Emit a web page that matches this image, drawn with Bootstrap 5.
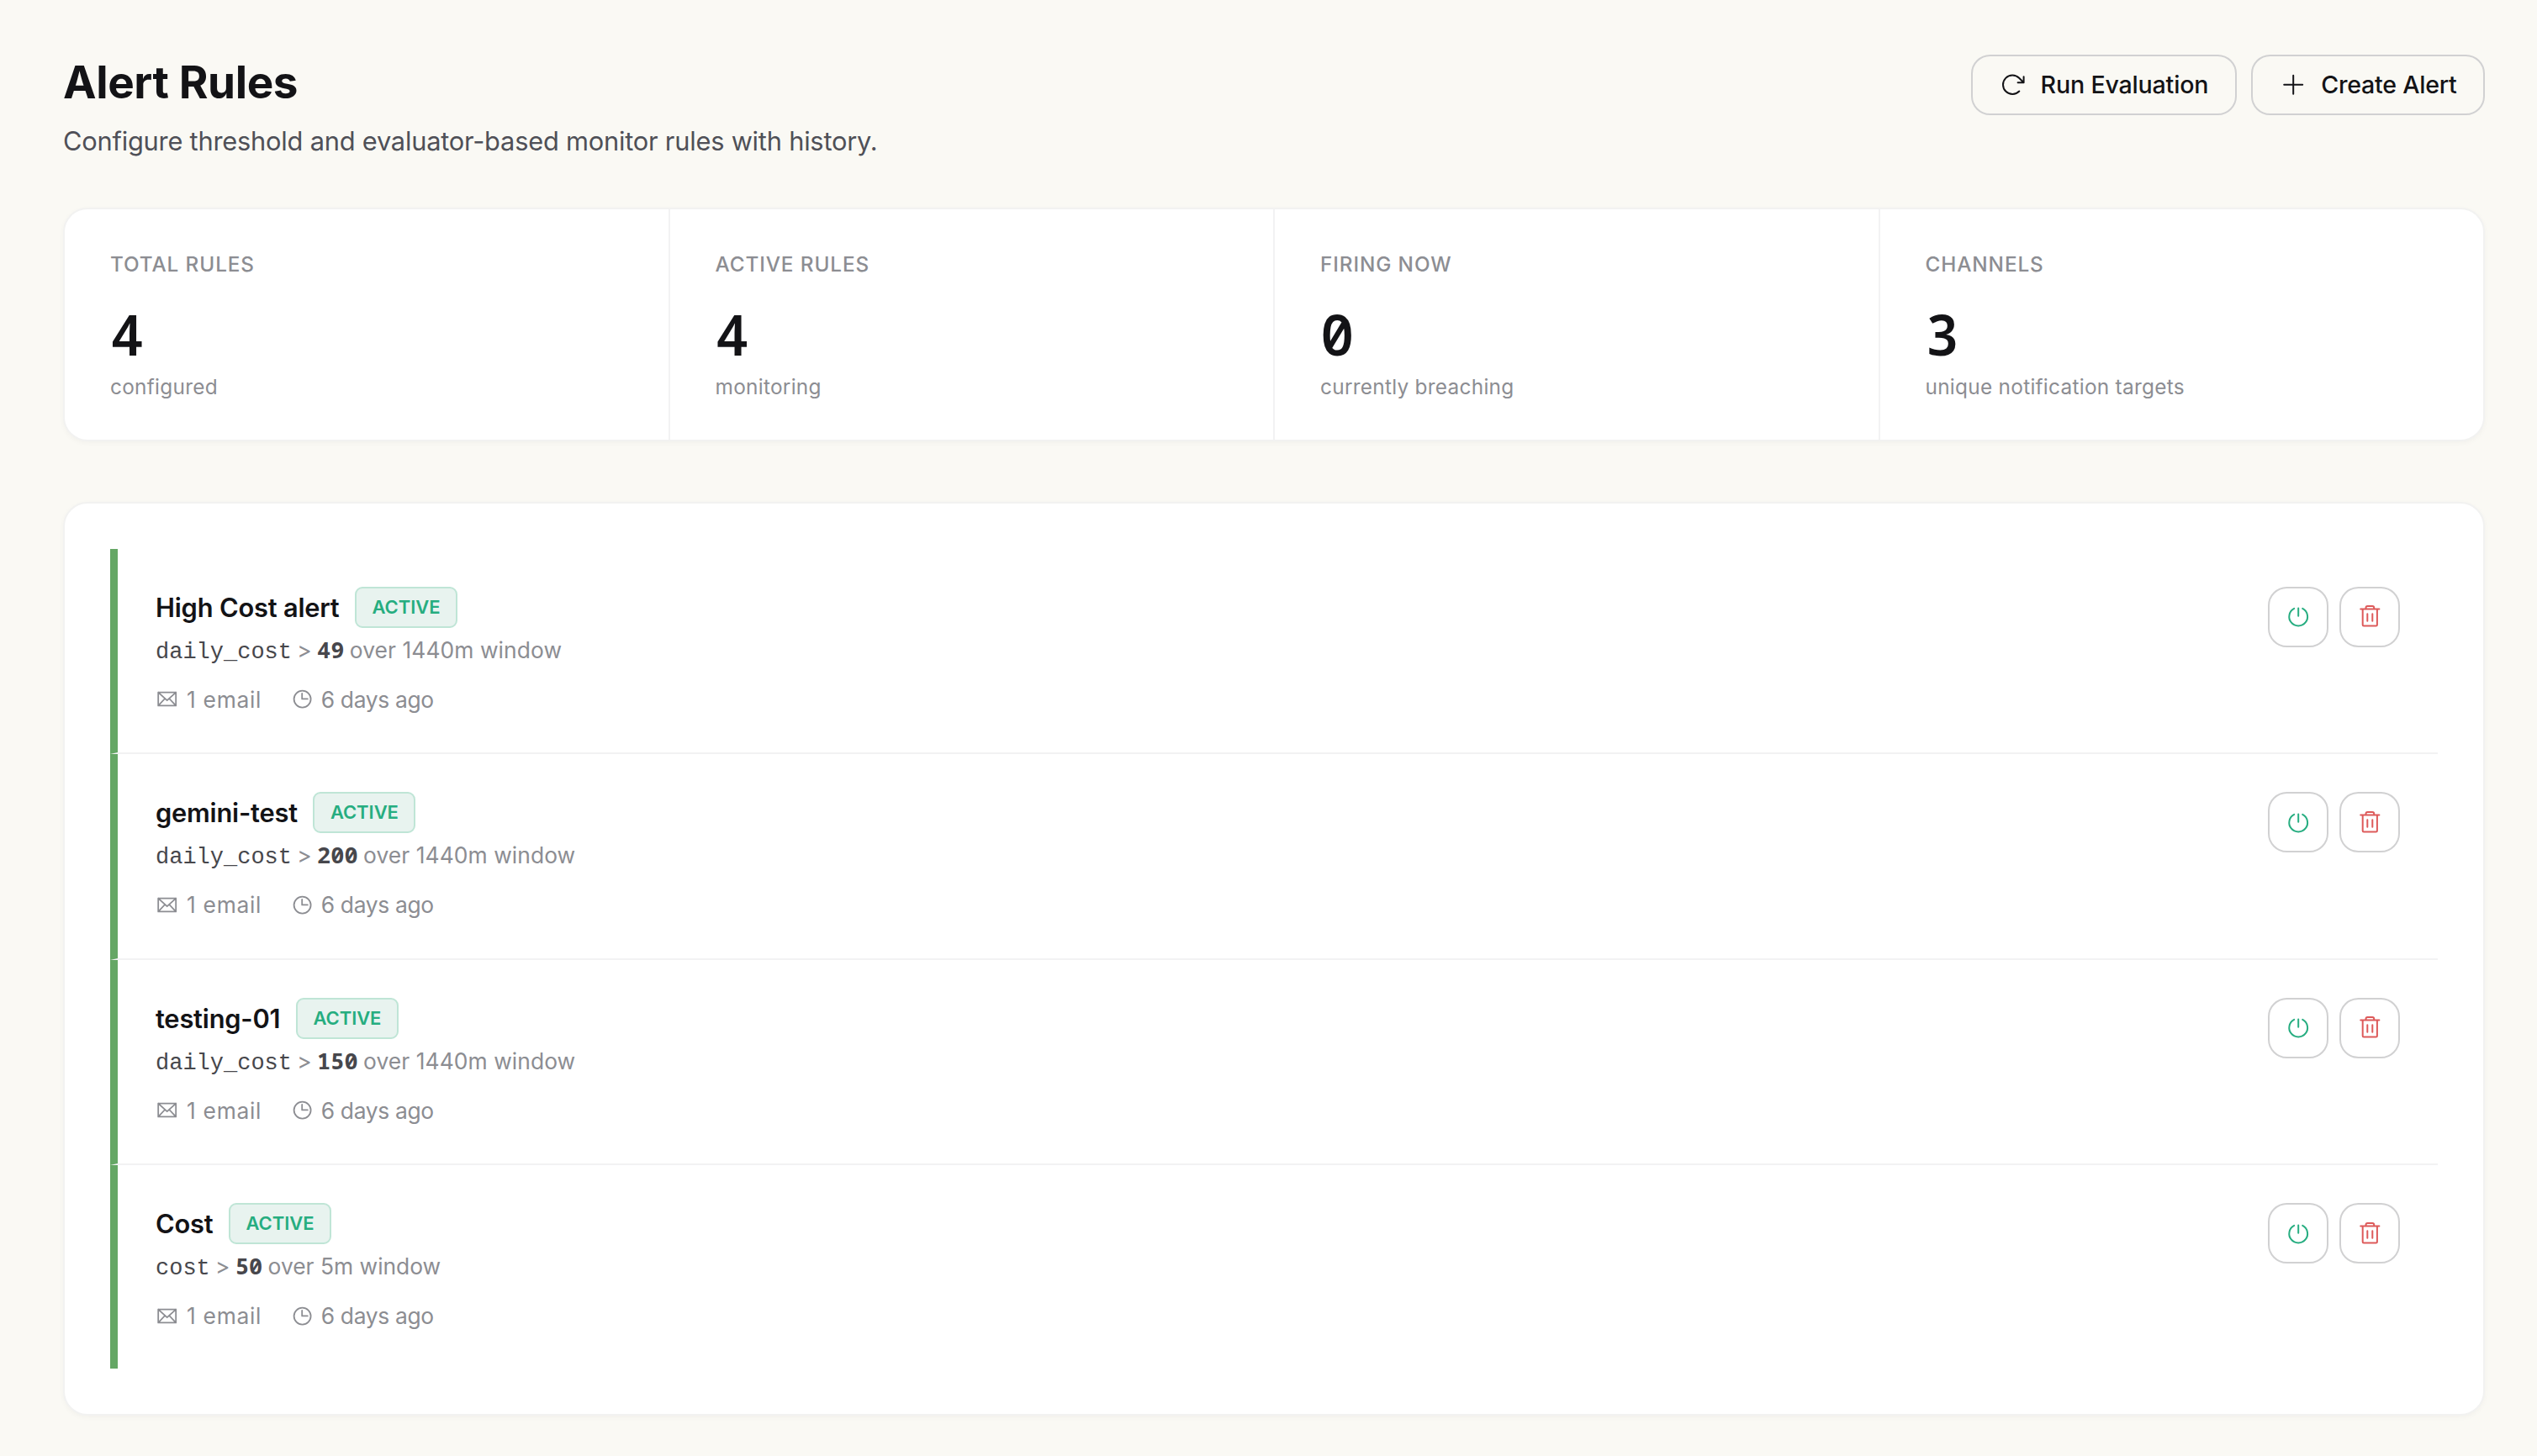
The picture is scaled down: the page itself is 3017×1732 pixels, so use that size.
<!DOCTYPE html>
<html lang="en">
<head>
<meta charset="utf-8">
<meta name="viewport" content="width=device-width, initial-scale=1">
<title>Alert Rules</title>
<link rel="stylesheet" href="https://cdn.jsdelivr.net/npm/bootstrap@5.3.0/dist/css/bootstrap.min.css">
<style>
  body{font-family:Inter,"Liberation Sans",sans-serif;background:#faf9f4;color:#131316}
  .page{padding:65px 62px 46px 75px}
  .page-title{font-size:53px;font-weight:700;line-height:66px;letter-spacing:-.4px;margin:0}
  .page-sub{font-size:30.8px;line-height:48px;letter-spacing:-.22px;color:#4f5057;margin:12.5px 0 0}
  .actions{gap:17.5px}
  .action-btn{height:72px;padding:0 31.5px;border:2px solid #d1d1d2;border-radius:22.5px;gap:18px;font-size:28.6px;font-weight:500;letter-spacing:-.19px;color:#131316}
  .action-btn+.action-btn{letter-spacing:-.25px}
  .action-btn svg{width:31.5px;height:31.5px}
  svg{fill:none;stroke:currentColor;stroke-width:2;stroke-linecap:round;stroke-linejoin:round;overflow:visible;flex:none}
  .panel{background:#fff;border:2px solid #f2f2f1;border-radius:29px;box-shadow:0 2px 6px rgba(20,20,30,.035)}
  .stats{height:278px;margin-top:55px;overflow:hidden}
  .stat{padding:47.5px 54px 0}
  .stat+.stat{border-left:2px solid #f2f2f3}
  .stat-label{font-size:24.3px;font-weight:500;line-height:36px;letter-spacing:.9px;color:#8c8d92}
  .stat-value{font-family:"Noto Sans Mono","DejaVu Sans Mono",monospace;font-size:67.5px;font-weight:600;line-height:76px;margin-top:27px}
  .stat-note{font-size:24.4px;line-height:36px;letter-spacing:.27px;color:#8c8d92;margin-top:7px}
  .rules{margin-top:72px;padding:54px}
  .rule{height:244.6px;padding:45px;border-left:9px solid #65a765;border-bottom:2px solid #f2f2f3}
  .rule:last-child{height:242px;border-bottom:0}
  .rule-name{font-size:30.8px;font-weight:600;line-height:49px;letter-spacing:-.2px}
  .rule-head{gap:18.5px;height:49px}
  .state{height:49px;padding:0 18.5px;border:2px solid #bfe5d6;border-radius:9px;background:#e8f3ef;color:#26ad80;font-size:22px;font-weight:600;letter-spacing:-.05px}
  .cond{gap:6.3px;margin-top:6px;font-size:26.4px;line-height:40px;height:40px;color:#8c8d92}
  .metric{font-family:"Liberation Mono",monospace;font-size:27px;color:#47474c}
  .limit{font-family:"Noto Sans Mono","DejaVu Sans Mono",monospace;font-size:27px;font-weight:700;color:#47474c}
  .over{letter-spacing:.07px}
  .meta{gap:34.6px;margin-top:19px;font-size:26.4px;line-height:40px;color:#8c8d92}
  .mails{gap:10px;letter-spacing:.7px}
  .since{gap:9px;letter-spacing:-.34px}
  .meta svg{width:27px;height:27px;stroke-width:1.8}
  .tool-btn{width:72px;height:72px;padding:0;border:2px solid #d1d1d2;border-radius:22.5px;background:#fff}
  .tool-btn svg{width:27px;height:27px}
  .tools{gap:13px}
  .power{color:#26ad80}
  .trash{color:#dd5a5a}
</style>
</head>
<body>
<svg class="d-none" aria-hidden="true">
  <symbol id="i-mail" viewBox="0 0 27 27" overflow="visible"><path d="M3.2 5.6h21v15.8h-21zM3.2 5.6l10.5 9.6L24.2 5.6M3.5 21.1l7.6-8.1M23.9 21.1 16.3 13"/></symbol>
  <symbol id="i-clock" viewBox="0 0 27 27" overflow="visible"><circle cx="13.6" cy="13.6" r="10"/><path d="M13.2 6.9v6.5h6.6"/></symbol>
  <symbol id="i-power" viewBox="0 0 27 27" overflow="visible"><path d="M8.2 3.9a10.9 10.9 0 1 0 10 0M13.2 3.4v9.3"/></symbol>
  <symbol id="i-trash" viewBox="0 0 27 27" overflow="visible"><path d="M2.2 4.6h22.2M4.7 4.6v18.6q0 1.3 1.3 1.3h14.6q1.3 0 1.3-1.3V4.6M8.5 4.6V2.9q0-2 2-2h5.7q2 0 2 2v1.7M10.3 10.3v8.5M16.3 10.3v8.5"/></symbol>
</svg>
<main class="page">
  <header class="d-flex justify-content-between align-items-start">
    <div>
      <h1 class="page-title">Alert Rules</h1>
      <p class="page-sub">Configure threshold and evaluator-based monitor rules with history.</p>
    </div>
    <div class="actions d-flex">
      <button class="btn action-btn d-flex align-items-center" type="button">
        <svg viewBox="0 0 31.5 31.5"><path d="M24.3 23.5A11.2 11.2 0 1 1 24.1 7.8L29.6 13.2M22.6 13.2h7v-7"/></svg>Run Evaluation</button>
      <button class="btn action-btn d-flex align-items-center" type="button">
        <svg viewBox="0 0 31.5 31.5"><path d="M5.2 15.75h22M16.2 4.75v22"/></svg>Create Alert</button>
    </div>
  </header>

  <section class="panel stats row g-0">
    <div class="col stat"><div class="stat-label">TOTAL RULES</div><div class="stat-value">4</div><div class="stat-note">configured</div></div>
    <div class="col stat"><div class="stat-label">ACTIVE RULES</div><div class="stat-value">4</div><div class="stat-note">monitoring</div></div>
    <div class="col stat"><div class="stat-label">FIRING NOW</div><div class="stat-value">0</div><div class="stat-note">currently breaching</div></div>
    <div class="col stat"><div class="stat-label">CHANNELS</div><div class="stat-value">3</div><div class="stat-note">unique notification targets</div></div>
  </section>

  <section class="panel rules">
    <article class="rule d-flex justify-content-between align-items-start">
      <div>
        <div class="rule-head d-flex align-items-center"><span class="rule-name">High Cost alert</span><span class="state d-flex align-items-center">ACTIVE</span></div>
        <div class="cond d-flex align-items-baseline"><span class="metric">daily_cost</span><span>&gt;</span><span class="limit">49</span><span class="over">over 1440m window</span></div>
        <div class="meta d-flex"><span class="mails d-flex align-items-center"><svg><use href="#i-mail"/></svg>1 email</span><span class="since d-flex align-items-center"><svg><use href="#i-clock"/></svg>6 days ago</span></div>
      </div>
      <div class="tools d-flex">
        <button class="btn tool-btn power d-flex align-items-center justify-content-center" type="button" aria-label="Disable"><svg><use href="#i-power"/></svg></button>
        <button class="btn tool-btn trash d-flex align-items-center justify-content-center" type="button" aria-label="Delete"><svg><use href="#i-trash"/></svg></button>
      </div>
    </article>
    <article class="rule d-flex justify-content-between align-items-start">
      <div>
        <div class="rule-head d-flex align-items-center"><span class="rule-name">gemini-test</span><span class="state d-flex align-items-center">ACTIVE</span></div>
        <div class="cond d-flex align-items-baseline"><span class="metric">daily_cost</span><span>&gt;</span><span class="limit">200</span><span class="over">over 1440m window</span></div>
        <div class="meta d-flex"><span class="mails d-flex align-items-center"><svg><use href="#i-mail"/></svg>1 email</span><span class="since d-flex align-items-center"><svg><use href="#i-clock"/></svg>6 days ago</span></div>
      </div>
      <div class="tools d-flex">
        <button class="btn tool-btn power d-flex align-items-center justify-content-center" type="button" aria-label="Disable"><svg><use href="#i-power"/></svg></button>
        <button class="btn tool-btn trash d-flex align-items-center justify-content-center" type="button" aria-label="Delete"><svg><use href="#i-trash"/></svg></button>
      </div>
    </article>
    <article class="rule d-flex justify-content-between align-items-start">
      <div>
        <div class="rule-head d-flex align-items-center"><span class="rule-name">testing-01</span><span class="state d-flex align-items-center">ACTIVE</span></div>
        <div class="cond d-flex align-items-baseline"><span class="metric">daily_cost</span><span>&gt;</span><span class="limit">150</span><span class="over">over 1440m window</span></div>
        <div class="meta d-flex"><span class="mails d-flex align-items-center"><svg><use href="#i-mail"/></svg>1 email</span><span class="since d-flex align-items-center"><svg><use href="#i-clock"/></svg>6 days ago</span></div>
      </div>
      <div class="tools d-flex">
        <button class="btn tool-btn power d-flex align-items-center justify-content-center" type="button" aria-label="Disable"><svg><use href="#i-power"/></svg></button>
        <button class="btn tool-btn trash d-flex align-items-center justify-content-center" type="button" aria-label="Delete"><svg><use href="#i-trash"/></svg></button>
      </div>
    </article>
    <article class="rule d-flex justify-content-between align-items-start">
      <div>
        <div class="rule-head d-flex align-items-center"><span class="rule-name">Cost</span><span class="state d-flex align-items-center">ACTIVE</span></div>
        <div class="cond d-flex align-items-baseline"><span class="metric">cost</span><span>&gt;</span><span class="limit">50</span><span>over 5m window</span></div>
        <div class="meta d-flex"><span class="mails d-flex align-items-center"><svg><use href="#i-mail"/></svg>1 email</span><span class="since d-flex align-items-center"><svg><use href="#i-clock"/></svg>6 days ago</span></div>
      </div>
      <div class="tools d-flex">
        <button class="btn tool-btn power d-flex align-items-center justify-content-center" type="button" aria-label="Disable"><svg><use href="#i-power"/></svg></button>
        <button class="btn tool-btn trash d-flex align-items-center justify-content-center" type="button" aria-label="Delete"><svg><use href="#i-trash"/></svg></button>
      </div>
    </article>
  </section>
</main>
<script src="https://cdn.jsdelivr.net/npm/bootstrap@5.3.0/dist/js/bootstrap.bundle.min.js"></script>
</body>
</html>
